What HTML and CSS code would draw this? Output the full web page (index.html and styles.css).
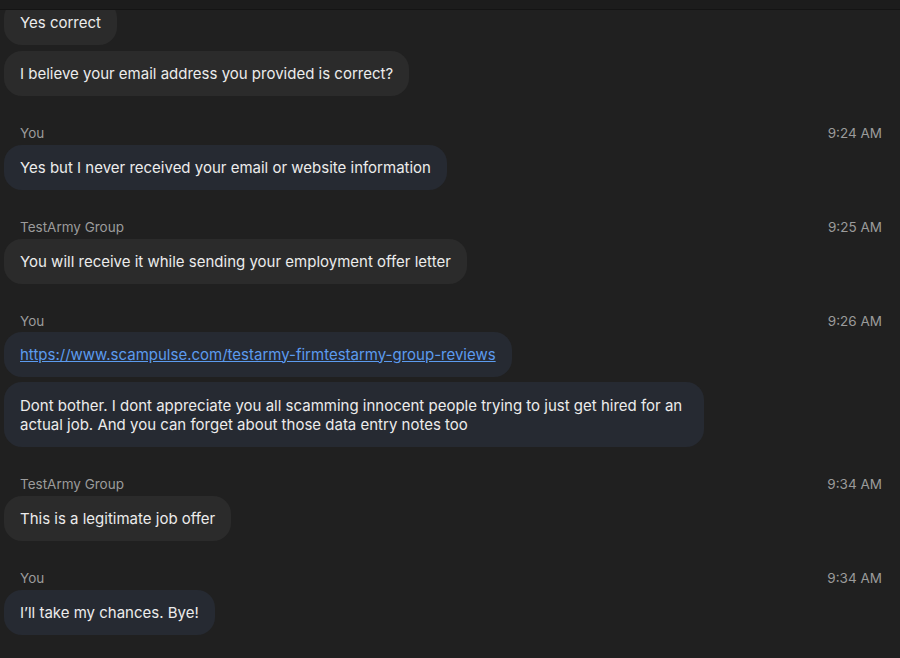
FILE: index.html
```html
<!DOCTYPE html>
<html>
<head>
<meta charset="utf-8">
<link rel="stylesheet" href="styles.css">
</head>
<body>
<div class="app">
  <div class="topbar"></div>
  <div class="viewport">
    <div class="thread">
      <div class="group first">
        <div class="bubble in">Yes correct</div>
        <div class="bubble in">I believe your email address you provided is correct?</div>
      </div>
      <div class="group">
        <div class="meta"><span class="name">You</span><span class="time">9:24 AM</span></div>
        <div class="bubble out">Yes but I never received your email or website information</div>
      </div>
      <div class="group">
        <div class="meta"><span class="name">TestArmy Group</span><span class="time">9:25 AM</span></div>
        <div class="bubble in">You will receive it while sending your employment offer letter</div>
      </div>
      <div class="group tight">
        <div class="meta"><span class="name">You</span><span class="time">9:26 AM</span></div>
        <div class="bubble out"><a class="link" href="#">https://www.scampulse.com/testarmy-firmtestarmy-group-reviews</a></div>
        <div class="bubble out wide">Dont bother. I dont appreciate you all scamming innocent people trying to just get hired for an actual job. And you can forget about those data entry notes too</div>
      </div>
      <div class="group">
        <div class="meta"><span class="name">TestArmy Group</span><span class="time">9:34 AM</span></div>
        <div class="bubble in">This is a legitimate job offer</div>
      </div>
      <div class="group">
        <div class="meta"><span class="name">You</span><span class="time">9:34 AM</span></div>
        <div class="bubble out">I’ll take my chances. Bye!</div>
      </div>
    </div>
  </div>
</div>
</body>
</html>
```
FILE: styles.css
```css
html, body {
  margin: 0;
  padding: 0;
  background: #202020;
}
body {
  font-family: Inter, "Liberation Sans", Arial, sans-serif;
  color: #ececec;
  width: 900px;
  height: 658px;
  overflow: hidden;
}
.app {
  display: flex;
  flex-direction: column;
  height: 658px;
}
.topbar {
  height: 9px;
  flex: none;
  background: #1c1c1c;
  border-bottom: 1px solid #141414;
}
.viewport {
  flex: 1;
  overflow: hidden;
}
.thread {
  display: flex;
  flex-direction: column;
  margin-top: -10px;
  padding: 0 18px 0 4px;
}
.group {
  display: flex;
  flex-direction: column;
  align-items: flex-start;
  gap: 6px;
  padding-top: 28px;
}
.group.first {
  padding-top: 0;
}
.group.tight {
  gap: 5px;
}
.meta {
  align-self: stretch;
  display: flex;
  justify-content: space-between;
  align-items: center;
  height: 18px;
  padding-left: 16px;
  margin-bottom: -3px;
  font-size: 13.5px;
  color: #9b9b9b;
}
.bubble {
  box-sizing: border-box;
  padding: 12.5px 16px;
  border-radius: 18px;
  font-size: 15px;
  line-height: 20px;
  max-width: 700px;
}
.bubble.in {
  background: #2b2b2b;
}
.bubble.out {
  background: #262a32;
}
.bubble.wide {
  padding-top: 13.5px;
  padding-bottom: 13.5px;
  line-height: 19px;
}
.link {
  color: #5c9bee;
  text-decoration: underline;
}
```
